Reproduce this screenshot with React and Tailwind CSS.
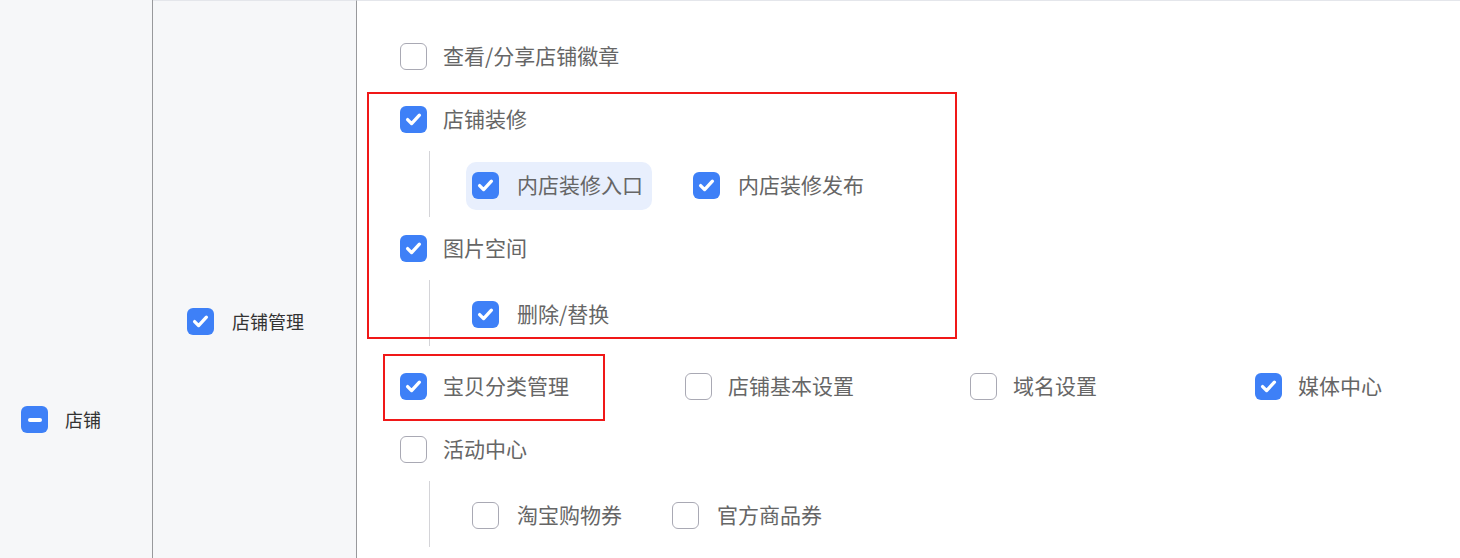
import React from "react";

const Check = ({ state = "off" }) => {
  if (state === "on") {
    return (
      <span className="flex h-[27px] w-[27px] shrink-0 items-center justify-center rounded-[6px] bg-[#3e80f7]">
        <svg width="27" height="27" viewBox="0 0 27 27" fill="none">
          <path
            d="M7.6 13.6l4 4 7.8-8.4"
            stroke="#fff"
            strokeWidth="3.3"
            strokeLinecap="round"
            strokeLinejoin="round"
          />
        </svg>
      </span>
    );
  }
  if (state === "part") {
    return (
      <span className="flex h-[27px] w-[27px] shrink-0 items-center justify-center rounded-[6px] bg-[#3e80f7]">
        <span className="h-[4px] w-[14px] rounded-full bg-white" />
      </span>
    );
  }
  return (
    <span className="h-[27px] w-[27px] shrink-0 rounded-[6px] border border-[#a9a9b4] bg-white" />
  );
};

const Item = ({ label, state, className = "" }) => (
  <div className={`flex items-center ${className}`}>
    <Check state={state} />
    <span className="relative -top-[1px] ml-[16px] whitespace-nowrap text-[21px] leading-none text-[#666]">
      {label}
    </span>
  </div>
);

const SubItem = ({ label, state, active }) => (
  <div
    className={`flex h-[48px] items-center rounded-[10px] pl-[6px] pr-[9px] ${
      active ? "bg-[#e8effd]" : ""
    }`}
  >
    <Check state={state} />
    <span className="relative -top-[1px] ml-[18px] whitespace-nowrap text-[21px] leading-none text-[#666]">
      {label}
    </span>
  </div>
);

const Row = ({ children }) => (
  <div className="flex h-[63px] items-center pl-[43px]">{children}</div>
);

const Children = ({ children }) => (
  <div className="ml-[72px] flex h-[66px] items-center gap-[35px] border-l border-[#d4d4d8] pl-[36px] pt-[3px]">
    {children}
  </div>
);

export default function App() {
  return (
    <div
      className="flex h-[558px] w-[1460px] overflow-hidden bg-white"
      style={{ fontFamily: '"Noto Sans CJK SC", "Noto Sans", sans-serif' }}
    >
      {/* level 1 */}
      <div className="w-[153px] shrink-0 border-r border-[#98999c] bg-[#f6f7f9] pl-[21px] pt-[406px]">
        <div className="flex items-center">
          <Check state="part" />
          <span className="relative -top-[1px] ml-[17px] text-[18px] leading-none text-[#333]">店铺</span>
        </div>
      </div>

      {/* level 2 */}
      <div className="w-[204px] shrink-0 border-r border-t border-r-[#98999c] border-t-[#e4e6eb] bg-[#f6f7f9] pl-[34px] pt-[307px]">
        <div className="flex items-center">
          <Check state="on" />
          <span className="relative -top-[1px] ml-[18px] text-[18px] leading-none text-[#333]">店铺管理</span>
        </div>
      </div>

      {/* level 3 */}
      <div className="relative flex-1 border-t border-[#e4e6eb] pt-[24px]">
        <Row>
          <Item label="查看/分享店铺徽章" state="off" />
        </Row>
        <Row>
          <Item label="店铺装修" state="on" />
        </Row>
        <Children>
          <SubItem label="内店装修入口" state="on" active />
          <SubItem label="内店装修发布" state="on" />
        </Children>
        <Row>
          <Item label="图片空间" state="on" />
        </Row>
        <Children>
          <SubItem label="删除/替换" state="on" />
        </Children>
        <div className="mt-[9px] flex h-[63px] items-center pl-[43px]">
          <Item label="宝贝分类管理" state="on" className="w-[285px]" />
          <Item label="店铺基本设置" state="off" className="w-[285px]" />
          <Item label="域名设置" state="off" className="w-[285px]" />
          <Item label="媒体中心" state="on" className="w-[285px]" />
        </div>
        <Row>
          <Item label="活动中心" state="off" />
        </Row>
        <Children>
          <SubItem label="淘宝购物券" state="off" />
          <SubItem label="官方商品券" state="off" />
        </Children>

        {/* annotation boxes */}
        <div className="pointer-events-none absolute left-[10px] top-[91px] h-[247px] w-[590px] border-2 border-[#f01818]" />
        <div className="pointer-events-none absolute left-[26px] top-[353px] h-[67px] w-[222px] border-2 border-[#f01818]" />
      </div>
    </div>
  );
}
